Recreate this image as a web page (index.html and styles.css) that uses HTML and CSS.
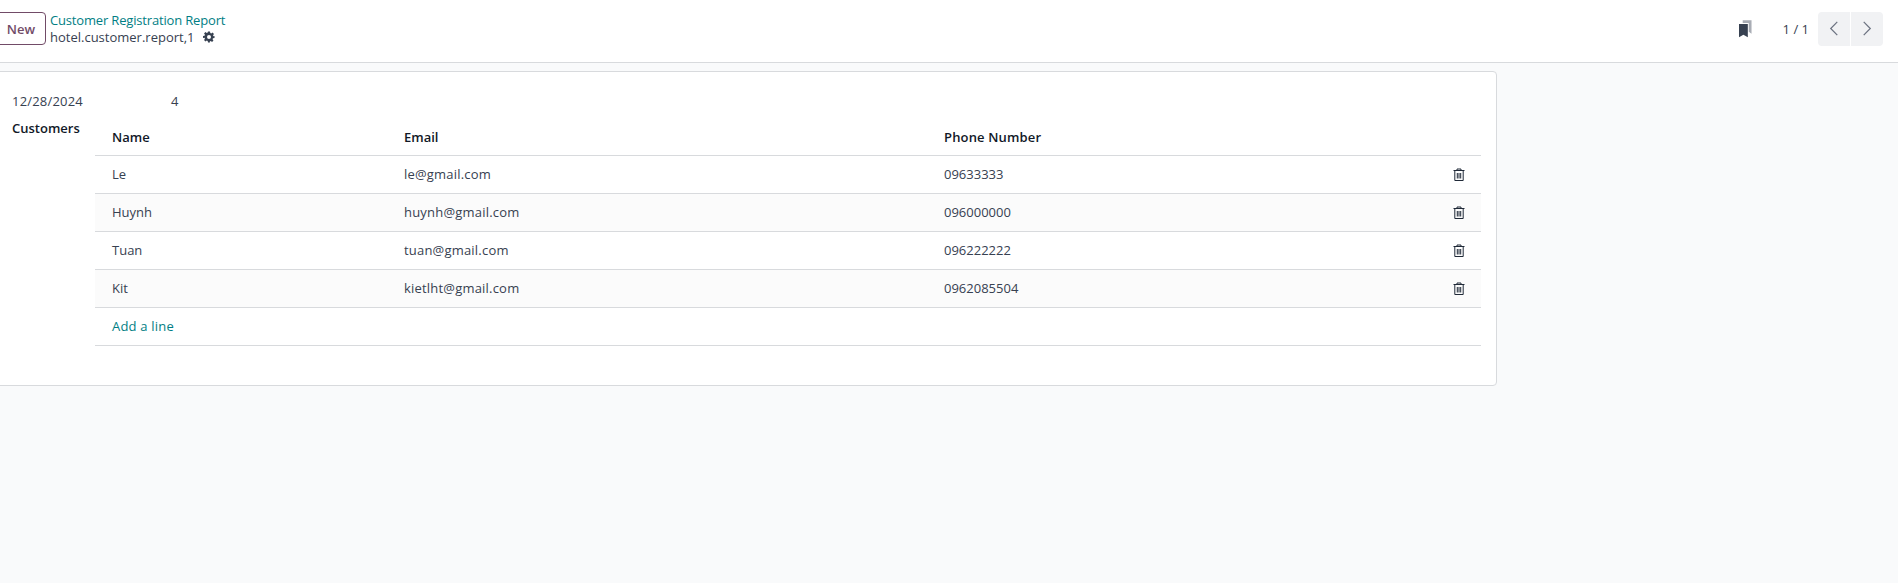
FILE: index.html
```html
<!DOCTYPE html>
<html lang="en">
<head>
    <meta charset="UTF-8">
    <title>Customer Registration Report</title>
    <link rel="stylesheet" href="styles.css">
</head>
<body>
    <div class="control-panel">
        <button class="btn-new">New</button>
        <div class="breadcrumb">
            <a class="crumb-link">Customer Registration Report</a>
            <div class="crumb-current">
                <span>hotel.customer.report,1</span>
                <svg class="gear" viewBox="0 0 24 24"><path fill-rule="evenodd" d="M10 1h4l.6 3.1 1.9.8 2.6-1.8 2.8 2.8-1.8 2.6.8 1.9L23 10v4l-3.1.6-.8 1.9 1.8 2.6-2.8 2.8-2.6-1.8-1.9.8L13.900 23H10l-.6-3.1-1.9-.8-2.6 1.8-2.8-2.8 1.8-2.6-.8-1.9L0 14v-4l3.1-.6.8-1.9-1.8-2.6 2.8-2.8 2.6 1.8 1.9-.8zM12 8a4 4 0 1 0 0 8 4 4 0 0 0 0-8z"/></svg>
            </div>
        </div>
        <div class="panel-right">
            <svg class="bookmarks" viewBox="0 0 14 19">
                <path fill="#a9adb5" d="M4 0h9.500v14.500l-3-2V3H4z"/>
                <path fill="#374151" d="M0 4h9.500v14.500L4.750 15.800 0 18.500z"/>
            </svg>
            <span class="pager-value">1 / 1</span>
            <div class="pager-buttons">
                <button class="pager-btn"><svg viewBox="0 0 10 16"><path d="M8.500 1 1.500 8l7 7"/></svg></button>
                <button class="pager-btn"><svg viewBox="0 0 10 16"><path d="M1.500 1l7 7-7 7"/></svg></button>
            </div>
        </div>
    </div>

    <div class="content">
        <div class="sheet">
            <div class="top-fields">
                <span class="date-field">12/28/2024</span>
                <span>4</span>
            </div>
            <div class="customers">
                <div class="customers-label">Customers</div>
                <table class="lines">
                    <thead>
                        <tr><th class="col-name">Name</th><th class="col-email">Email</th><th class="col-phone">Phone Number</th><th class="col-trash"></th></tr>
                    </thead>
                    <tbody id="lines"></tbody>
                </table>
            </div>
        </div>
    </div>

    <script>
        const customers = [
            { name: "Le", email: "le@gmail.com", phone: "09633333" },
            { name: "Huynh", email: "huynh@gmail.com", phone: "096000000" },
            { name: "Tuan", email: "tuan@gmail.com", phone: "096222222" },
            { name: "Kit", email: "kietlht@gmail.com", phone: "0962085504" }
        ];

        const trash = '<svg class="trash" viewBox="0 0 12 13"><path d="M4 2.500V1h4v1.500M.5 2.500h11M1.800 2.500v10h8.400v-10M4.300 5v5.500M6 5v5.500M7.700 5v5.500"/></svg>';

        let rows = '';
        customers.forEach(function(c) {
            rows += '<tr><td>' + c.name + '</td><td class="cell-email">' + c.email + '</td><td>' + c.phone + '</td><td class="cell-trash">' + trash + '</td></tr>';
        });
        rows += '<tr><td class="add-line" colspan="4">Add a line</td></tr>';
        document.getElementById('lines').innerHTML = rows;
    </script>
</body>
</html>
```

FILE: styles.css
```css
html, body { margin: 0; height: 100%; overflow: hidden; }
body { font-family: "Open Sans", "Noto Sans", sans-serif; font-size: 13px; color: #374151; background: #f9fafb; }
button { font-family: inherit; }

.control-panel { display: flex; align-items: center; height: 57px; padding: 0 15px 5px 0; background: #fff; border-bottom: 1px solid #d8dadd; }
.btn-new { width: 56px; height: 33px; margin-left: -10px; margin-right: 4px; padding: 0 0 0 6px; background: #fff; color: #714b67; border: 1px solid #714b67; border-radius: 4px; font-size: 13px; font-weight: 600; }
.breadcrumb { display: flex; flex-direction: column; line-height: 17px; }
.crumb-link { color: #017e84; letter-spacing: -0.17px; }
.crumb-current { display: flex; align-items: center; gap: 9px; }
.gear { width: 12px; height: 12px; fill: #374151; }

.panel-right { display: flex; align-items: center; margin-left: auto; }
.bookmarks { width: 13px; height: 18px; margin-right: 31px; }
.pager-value { margin-right: 9px; }
.pager-buttons { display: flex; gap: 1px; }
.pager-btn { display: flex; align-items: center; justify-content: center; width: 32px; height: 34px; padding: 0; border: none; background: #f1f2f4; }
.pager-btn:first-child { border-radius: 4px 0 0 4px; }
.pager-btn:last-child { border-radius: 0 4px 4px 0; }
.pager-btn svg { width: 10px; height: 15px; fill: none; stroke: #6b7280; stroke-width: 1.3; }

.content { padding-top: 8px; }
.sheet { width: 1511px; height: 315px; margin-left: -14px; padding: 20px 15px 0 25px; background: #fff; border: 1px solid #d8dadd; border-radius: 4px; box-sizing: border-box; }
.top-fields { display: flex; margin-bottom: 9px; line-height: 18px; }
.date-field { width: 159px; letter-spacing: 0.2px; }

.customers { display: flex; }
.customers-label { width: 83px; font-weight: 600; color: #111827; line-height: 18px; }
.lines { flex: 1; border-collapse: collapse; table-layout: fixed; }
.lines th { height: 36px; padding: 0 0 0 17px; text-align: left; font-weight: 600; color: #111827; border-bottom: 1px solid #d8dadd; box-sizing: border-box; }
.lines td { height: 38px; padding: 0 0 0 17px; border-bottom: 1px solid #d8dadd; box-sizing: border-box; }
.lines tbody tr:nth-child(even) td { background: #fbfbfb; }
.col-name { width: 292px; }
.col-email { width: 540px; }
.lines th.col-phone { letter-spacing: 0.15px; }
.col-trash { width: 48px; }
.lines td.cell-email { letter-spacing: 0.2px; }
.lines td.cell-trash { padding-left: 20px; }
.trash { display: block; width: 12px; height: 13px; fill: none; stroke: #1f2937; stroke-width: 1; }
.lines td.add-line { color: #017e84; letter-spacing: 0.2px; }
```
